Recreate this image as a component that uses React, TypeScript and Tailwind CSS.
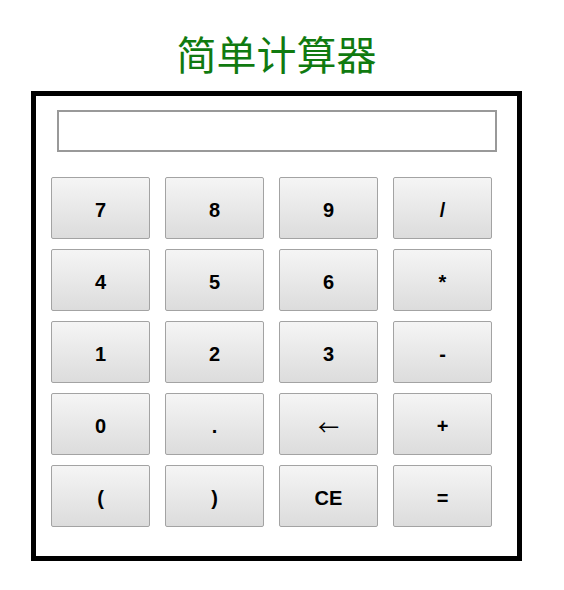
import React from "react";

const keys: string[][] = [
  ["7", "8", "9", "/"],
  ["4", "5", "6", "*"],
  ["1", "2", "3", "-"],
  ["0", ".", "←", "+"],
  ["(", ")", "CE", "="],
];

export default function App() {
  return (
    <div className="w-[564px] h-[590px] bg-white pl-[31px]" style={{ fontFamily: '"Liberation Sans", Arial, sans-serif' }}>
      <div className="w-[491px]">
        <h1
          className="pt-[33px] h-[91px] text-center text-[40px] leading-[40px] text-[#107a10] font-normal"
          style={{ fontFamily: '"Noto Sans CJK SC", serif' }}
        >
          简单计算器
        </h1>
        <div className="w-[491px] h-[470px] border-[5px] border-black">
          <div className="ml-[21px] mt-[14px] w-[440px] h-[42px] border-2 border-[#999999] bg-white" />
          <div className="ml-[15px] mt-[25px] grid grid-cols-[repeat(4,99px)] auto-rows-[62px] gap-x-[15px] gap-y-[10px]">
            {keys.flat().map((k) => (
              <button
                key={k}
                className="flex items-center justify-center pt-[5px] rounded-[2px] border border-[#a3a3a3] bg-gradient-to-b from-[#f5f5f5] to-[#dcdcdc] text-black text-[20px] leading-[23px] font-bold"
              >
                {k === "←" ? (
                  <span className="font-normal text-[21px]" style={{ fontFamily: '"Noto Sans CJK SC", sans-serif' }}>
                    ←
                  </span>
                ) : (
                  k
                )}
              </button>
            ))}
          </div>
        </div>
      </div>
    </div>
  );
}
